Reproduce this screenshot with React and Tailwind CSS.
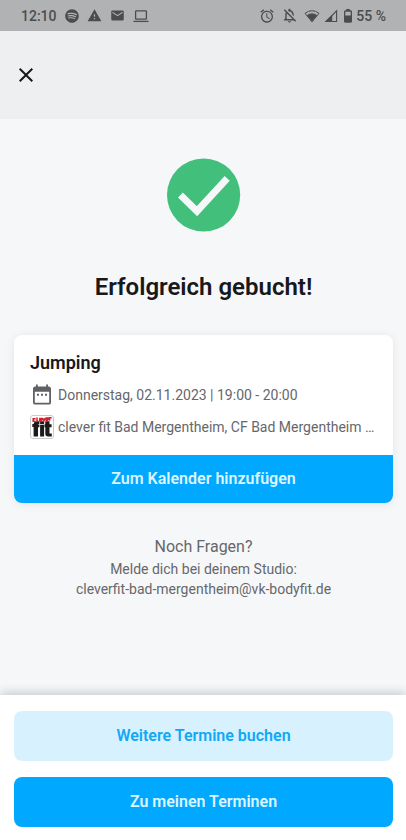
import { FaSpotify } from 'react-icons/fa';
import {
  MdAlarm, MdClose, MdEmail, MdOutlineNotificationsOff, MdWarning,
} from 'react-icons/md';

const BOOKING = {
  title: 'Jumping',
  date: 'Donnerstag, 02.11.2023 | 19:00 - 20:00',
  place: 'clever fit Bad Mergentheim, CF Bad Mergentheim …',
};

const STUDIO_MAIL = 'cleverfit-bad-mergentheim@vk-bodyfit.de';

// ─── Icons ────────────────────────────────────────────────────────────────────

function LaptopIcon() {
  return (
    <svg viewBox="0 0 16 14" className="h-3.5 w-4" fill="none" stroke="currentColor" strokeWidth="1.3">
      <rect x="2.6" y="1.8" width="10.8" height="8.4" rx="0.6" />
      <path d="M.5 12.4h15" />
    </svg>
  );
}

function WifiIcon() {
  return (
    <svg viewBox="0 0 16 14" className="h-3.5 w-4" fill="none" stroke="currentColor">
      <path d="M1 4.4Q8-1 15 4.4L8 12.8Z" strokeWidth="1" strokeLinejoin="round" />
      <path d="M3 6.2Q8 3 13 6.2L8 12.6Z" fill="currentColor" strokeWidth=".4" />
    </svg>
  );
}

function SignalIcon() {
  return (
    <svg viewBox="0 0 14 14" className="size-3.5" fill="currentColor">
      <path d="M12.6 1.8V12.5H1.9Z" fill="none" stroke="currentColor" strokeWidth="1.1" />
      <path d="M8.2 6V13H1Z" />
    </svg>
  );
}

function BatteryIcon() {
  return (
    <svg viewBox="0 0 8 14" className="h-3.5 w-2" fill="currentColor">
      <path d="M2.2 0h3.6v1.8H2.2z" />
      <rect x=".65" y="2" width="6.7" height="11" rx=".7" fill="none" stroke="currentColor" strokeWidth="1.3" />
      <path d="M.5 6.5h7v6.500h-7z" />
    </svg>
  );
}

function CalendarIcon() {
  return (
    <svg viewBox="0 0 24 24" className="size-6 shrink-0" fill="#5f6167" aria-hidden="true">
      <path
        fillRule="evenodd"
        d="M6 1.6h1.8v2h8.4v-2H18v2h.8Q21 3.6 21 5.8V19.4Q21 21.6 18.8 21.6H5.2Q3 21.6 3 19.4V5.8Q3 3.6 5.2 3.6H6ZM4.8 8.8V19.2Q4.8 19.8 5.4 19.8H18.6Q19.2 19.8 19.2 19.2V8.8Z"
      />
      <path d="M7 10.8h2v2H7zM11 10.8h2v2h-2zM15 10.8h2v2h-2z" />
    </svg>
  );
}

function CheckCircle() {
  return (
    <svg viewBox="0 0 74 74" className="size-[74px]" role="img" aria-label="Erfolgreich">
      <circle cx="36.6" cy="37" r="36.6" fill="#41bf7b" />
      <path d="M13.4 37L30 53.2L60.2 20.4" fill="none" stroke="#f6f7f9" strokeWidth="7" />
    </svg>
  );
}

function StudioLogo() {
  return (
    <svg viewBox="0 0 24 24" className="size-6 shrink-0" role="img" aria-label="clever fit">
      <rect x=".5" y=".5" width="23" height="23" rx="2.5" fill="#fff" stroke="#c9cacc" />
      {/* black "fit" mark */}
      <g fill="#1c1a1b">
        <path d="M3.6 21.5V12H2.3V9H3.6Q3.8 6.4 7 6.2H9.4V9H8V9.6H9.4V12.2H8V21.5Z" />
        <path d="M10.1 6.2H14.1V8.9H10.1ZM10.1 9.7H14.1V21.5H10.1Z" />
        <path d="M15.3 6.2H19.5V9.3H21.6V12.2H19.5V18.5H21.8V21.5H18.2Q15.3 21.5 15.3 18.8V12.2H14.5V9.3H15.3Z" />
      </g>
      {/* red "clever" strip */}
      <g fill="none" stroke="#d5202f" strokeWidth="1.5">
        <path d="M5.6 3.8H3.2V6.2H5.6M7 2.4V6.2H8.7M12 5.9H9.8V3.5H12V4.7H9.8M12.8 3.2L14 5.7L15.2 3M18.2 5.5H16.2V2.9H18.2V4.2H16.2M19.6 5.7V2.8H21.7" />
      </g>
    </svg>
  );
}

// ─── Sections ─────────────────────────────────────────────────────────────────

function StatusBar() {
  return (
    <div className="flex h-[31px] items-center justify-between bg-[#b1b2b4] pl-[21px] pr-5 text-sm font-medium text-[#4c4c4e]">
      <div className="flex items-center gap-2">
        <span>12:10</span>
        <FaSpotify size={14} />
        <MdWarning size={15} />
        <MdEmail size={15} />
        <LaptopIcon />
      </div>
      <div className="flex items-center gap-1.5">
        <MdAlarm size={16} />
        <MdOutlineNotificationsOff size={17} />
        <div className="flex items-center gap-1">
          <WifiIcon />
          <SignalIcon />
        </div>
        <div className="flex items-center gap-1">
          <BatteryIcon />
          <span>55 %</span>
        </div>
      </div>
    </div>
  );
}

function BookingCard({ booking }) {
  return (
    <section className="mt-8 overflow-hidden rounded-lg bg-white shadow-[0_1px_10px_rgba(0,0,0,0.08)]">
      <div className="flex h-[120px] flex-col px-4 pt-4">
        <h2 className="text-lg leading-6 font-semibold text-[#17181a]">{booking.title}</h2>
        <p className="mt-2 flex items-center gap-1 text-sm leading-6">
          <CalendarIcon />
          {booking.date}
        </p>
        <p className="mt-2 flex items-center gap-1 text-sm leading-6">
          <StudioLogo />
          <span className="truncate">{booking.place}</span>
        </p>
      </div>
      <button type="button" className="h-12 w-full bg-[#00a8ff] text-base font-semibold text-[#dcf5ff]">
        Zum Kalender hinzufügen
      </button>
    </section>
  );
}

// ─── Page ─────────────────────────────────────────────────────────────────────

export default function App() {
  return (
    <div className="flex min-h-dvh flex-col bg-[#f6f7f9] font-['Roboto',sans-serif] text-[#66676a]">
      <StatusBar />

      <header className="flex h-[88px] items-center bg-[#eeeff1] px-3.5">
        <button type="button" aria-label="Schließen" className="text-[#17181a]">
          <MdClose size={24} />
        </button>
      </header>

      <main className="flex flex-1 flex-col pt-[39px] pr-[13px] pl-3.5">
        <div className="flex justify-center">
          <CheckCircle />
        </div>
        <h1 className="mt-[39px] text-center text-2xl leading-8 font-semibold text-[#17181a]">
          Erfolgreich gebucht!
        </h1>

        <BookingCard booking={BOOKING} />

        <div className="mt-8 pb-8 text-center text-sm leading-5">
          <p className="text-base leading-6">Noch Fragen?</p>
          <p>Melde dich bei deinem Studio:</p>
          <a href="mailto:cleverfit-bad-mergentheim@vk-bodyfit.de">{STUDIO_MAIL}</a>
        </div>
      </main>

      <footer className="flex flex-col gap-4 bg-white pt-4 pr-[13px] pb-[13px] pl-3.5 shadow-[0_-2px_10px_rgba(0,0,0,0.2)]">
        <button type="button" className="h-[50px] rounded-lg bg-[#d8f1ff] text-base font-semibold text-[#12a8f3]">
          Weitere Termine buchen
        </button>
        <button type="button" className="h-[50px] rounded-lg bg-[#00a8ff] text-base font-semibold text-[#dcf5ff]">
          Zu meinen Terminen
        </button>
      </footer>
    </div>
  );
}
